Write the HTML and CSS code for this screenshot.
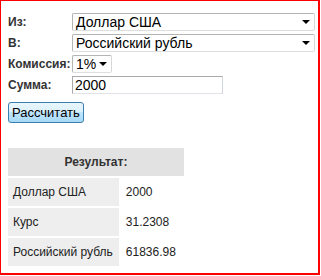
FILE: index.html
```html
<!DOCTYPE html>
<html>
<head>
<meta charset="utf-8">
<link rel="stylesheet" href="styles.css">
</head>
<body>
<div class="frame">
  <table class="form">
    <tr><td class="lbl">Из:</td><td><div class="select wide"><span>Доллар США</span><i class="arrow"></i></div></td></tr>
    <tr><td class="lbl">В:</td><td><div class="select wide"><span>Российский рубль</span><i class="arrow"></i></div></td></tr>
    <tr><td class="lbl">Комиссия:</td><td><div class="select small"><span>1%</span><i class="arrow"></i></div></td></tr>
    <tr><td class="lbl">Сумма:</td><td><div class="input">2000</div></td></tr>
  </table>
  <button class="btn">Рассчитать</button>
  <table class="result">
    <tr><th colspan="2">Результат:</th></tr>
    <tr><td class="k">Доллар США</td><td class="v">2000</td></tr>
    <tr><td class="k">Курс</td><td class="v">31.2308</td></tr>
    <tr><td class="k">Российский рубль</td><td class="v">61836.98</td></tr>
  </table>
</div>
</body>
</html>
```
FILE: styles.css
```css
html, body { margin: 0; padding: 0; background: #fff; }
body { font-family: "Liberation Sans", Arial, sans-serif; color: #222; }
.frame {
  width: 320px; height: 275px;
  border: 1px solid #f00;
  border-right-width: 2px; border-bottom-width: 2px;
  padding: 12px 0 0 6px;
  box-sizing: border-box;
}
.form { border-collapse: collapse; }
.form td { padding: 0 0 3px 0; vertical-align: middle; }
.lbl { font-size: 12px; font-weight: bold; color: #333; padding-left: 1px !important; width: 64px; }
.select {
  box-sizing: border-box; height: 18px;
  border: 1px solid #b5b5b5; border-bottom-color: #dedede; border-right-color: #d8d8d8;
  border-radius: 2px;
  display: flex; align-items: center; justify-content: space-between;
  font-size: 14px; color: #000; padding: 0 4px 0 3px;
}
.wide { width: 243px; }
.small { width: 40px; }
.arrow { width: 0; height: 0; border-left: 4px solid transparent; border-right: 4px solid transparent; border-top: 4px solid #000; }
.input {
  box-sizing: border-box; height: 18px; width: 151px;
  border: 1px solid #aaa; border-bottom-color: #e2e3ea; border-right-color: #d0d4dc;
  font-size: 14px; line-height: 16px; padding-left: 2px; color: #000;
}
.btn {
  display: block;
  margin: 5px 0 0 1px; height: 21px; padding: 0 3px;
  font-family: "Liberation Sans", Arial, sans-serif; font-size: 13px; color: #000;
  border: 1px solid #3c7fb1; border-radius: 3px;
  background: linear-gradient(#eaf6fd, #d9f0fc 50%, #bee6fd 50%, #a7d9f5);
}
.result { border-collapse: separate; border-spacing: 0 2px; margin: 23px 0 0 1px; font-size: 12px; color: #222; }
.result th { background: #e2e2e2; height: 28px; padding: 0; font-weight: bold; text-align: center; font-size: 12px; color: #333; }
.result td { height: 28px; padding: 0; }
.result .k { background: #eeeeee; padding: 0 6px 0 5px; }
.result .v { padding: 0 8px 0 7px; }
```
